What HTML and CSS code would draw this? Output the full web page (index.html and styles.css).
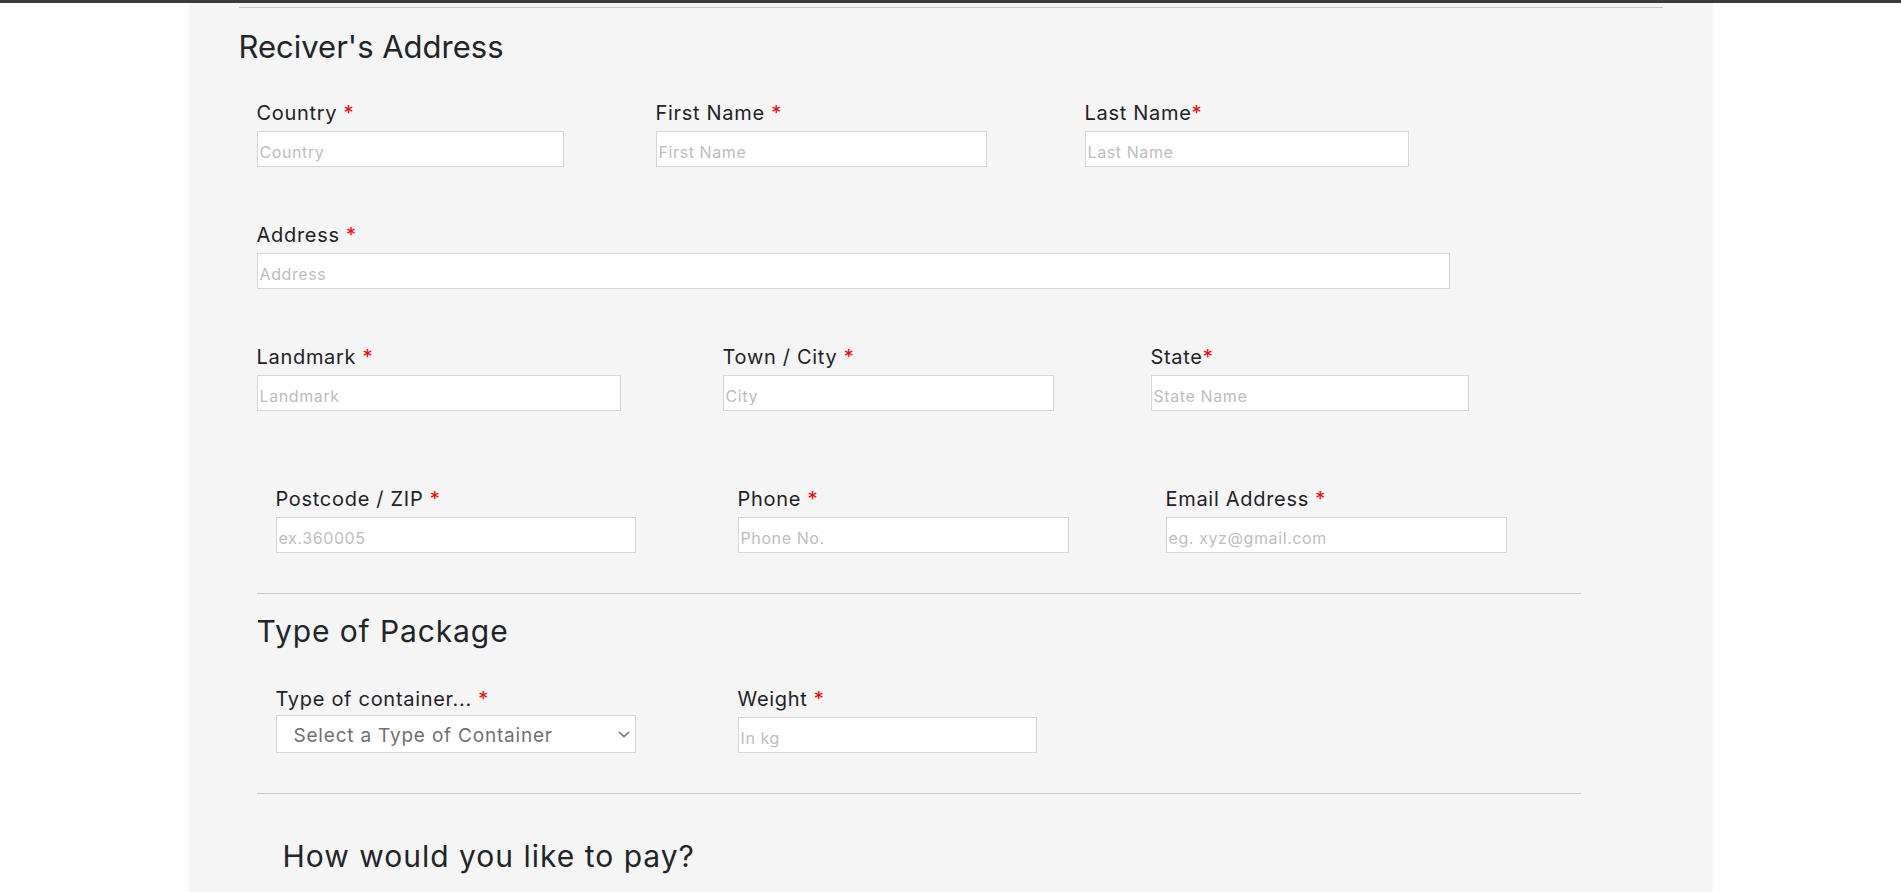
FILE: index.html
```html
<!DOCTYPE html>
<html lang="en">
<head>
<meta charset="utf-8">
<title>Reciver's Address</title>
<link rel="stylesheet" href="styles.css">
</head>
<body>
<div class="topbar"></div>
<main class="panel">
  <hr class="rule rule-top">
  <h2 class="title title-receiver">Reciver's Address</h2>

  <section class="form-block">
    <div class="row row-1">
      <div class="field w-country"><label class="lbl">Country <span class="req">*</span></label><input class="inp" type="text" placeholder="Country"></div>
      <div class="field w-first"><label class="lbl">First Name <span class="req">*</span></label><input class="inp" type="text" placeholder="First Name"></div>
      <div class="field w-last"><label class="lbl">Last Name<span class="req">*</span></label><input class="inp" type="text" placeholder="Last Name"></div>
    </div>

    <div class="row row-2">
      <div class="field w-address"><label class="lbl">Address <span class="req">*</span></label><input class="inp" type="text" placeholder="Address"></div>
    </div>

    <div class="row row-3">
      <div class="field w-landmark"><label class="lbl">Landmark <span class="req">*</span></label><input class="inp" type="text" placeholder="Landmark"></div>
      <div class="field w-city"><label class="lbl">Town / City <span class="req">*</span></label><input class="inp" type="text" placeholder="City"></div>
      <div class="field w-state"><label class="lbl">State<span class="req">*</span></label><input class="inp" type="text" placeholder="State Name"></div>
    </div>

    <div class="row row-4">
      <div class="field w-zip"><label class="lbl">Postcode / ZIP <span class="req">*</span></label><input class="inp" type="text" placeholder="ex.360005"></div>
      <div class="field w-phone"><label class="lbl">Phone <span class="req">*</span></label><input class="inp" type="text" placeholder="Phone No."></div>
      <div class="field w-email"><label class="lbl">Email Address <span class="req">*</span></label><input class="inp" type="text" placeholder="eg. xyz@gmail.com"></div>
    </div>

    <hr class="rule rule-mid">
    <h2 class="title title-package">Type of Package</h2>

    <div class="row row-5">
      <div class="field w-container">
        <label class="lbl lbl-select">Type of container... <span class="req">*</span></label>
        <div class="select-wrap">
          <select class="sel">
            <option>Select a Type of Container</option>
          </select>
          <svg class="chev" width="12" height="7" viewBox="0 0 12 7" aria-hidden="true"><polyline points="1,1 6,5.6 11,1" fill="none" stroke="#757575" stroke-width="1.6"/></svg>
        </div>
      </div>
      <div class="field w-weight"><label class="lbl">Weight <span class="req">*</span></label><input class="inp" type="text" placeholder="In kg"></div>
    </div>

    <hr class="rule rule-bottom">
    <h2 class="title title-pay">How would you like to pay?</h2>
  </section>
</main>
</body>
</html>
```

FILE: styles.css
```css
* { box-sizing: border-box; }

html, body {
  margin: 0;
  padding: 0;
  background: #ffffff;
}

body {
  font-family: Inter, "Noto Sans", "DejaVu Sans", sans-serif;
  color: #212529;
  overflow: hidden;
}

.topbar {
  height: 3px;
  background: #3b3b3b;
}

.panel {
  width: 1524px;
  margin: 0 auto;
  background: #f5f5f5;
  padding: 4px 50px 40px;
  min-height: 889px;
}

.rule {
  border: 0;
  border-top: 1px solid #c6c6c6;
  margin: 0;
  height: 0;
}

.title {
  margin: 0;
  font-weight: 400;
  line-height: 40px;
  color: #212529;
}

.title-receiver {
  font-size: 31px;
  margin-top: 19px;
}

.form-block {
  margin-left: 18px;
  width: 1324px;
  margin-top: 34px;
}

.row {
  display: grid;
  align-items: start;
}

.row-1 { grid-template-columns: 399px 429px 1fr; }
.row-2 { grid-template-columns: 1fr; margin-top: 56px; }
.row-3 { grid-template-columns: 466px 428px 1fr; margin-top: 56px; }
.row-4 { grid-template-columns: 462px 428px 1fr; margin-top: 76px; padding-left: 19px; }
.row-5 { grid-template-columns: 462px 1fr; margin-top: 36px; padding-left: 19px; }

.field {
  display: flex;
  flex-direction: column;
  align-items: flex-start;
}

.lbl {
  display: block;
  font-size: 20px;
  line-height: 24px;
  letter-spacing: 0.7px;
  color: #1f2128;
  margin-bottom: 6px;
  white-space: nowrap;
}

.lbl-select { margin-bottom: 4px; }

.req {
  color: #ff0000;
}

.inp {
  display: block;
  height: 36px;
  background: #ffffff;
  border: 1px solid #d6d6d6;
  border-radius: 0;
  padding: 5px 2px 0;
  font-family: inherit;
  font-size: 16px;
  letter-spacing: 0.6px;
  color: #333;
  outline: none;
}

.inp::placeholder {
  color: #bdbdbd;
  opacity: 1;
}

.w-country .inp { width: 307px; }
.w-first .inp { width: 331px; }
.w-last .inp { width: 324px; }
.w-address .inp { width: 1193px; }
.w-landmark .inp { width: 364px; }
.w-city .inp { width: 331px; }
.w-state .inp { width: 318px; }
.w-zip .inp { width: 360px; }
.w-phone .inp { width: 331px; }
.w-email .inp { width: 341px; }
.w-weight .inp { width: 299px; }

.select-wrap {
  position: relative;
  width: 360px;
}

.sel {
  display: block;
  width: 360px;
  height: 38px;
  appearance: none;
  -webkit-appearance: none;
  background: #ffffff;
  border: 1px solid #d6d6d6;
  border-radius: 0;
  padding: 3px 30px 0 17px;
  font-family: inherit;
  font-size: 19px;
  letter-spacing: 0.8px;
  color: #6f6f6f;
  outline: none;
}

.chev {
  position: absolute;
  right: 6px;
  top: 16px;
  pointer-events: none;
}

.rule-mid { margin-top: 40px; }

.title-package {
  font-size: 30px;
  letter-spacing: 0.9px;
  margin-top: 17px;
}

.rule-bottom { margin-top: 40px; }

.title-pay {
  font-size: 30px;
  letter-spacing: 1px;
  margin-top: 42px;
  padding-left: 26px;
}
```
